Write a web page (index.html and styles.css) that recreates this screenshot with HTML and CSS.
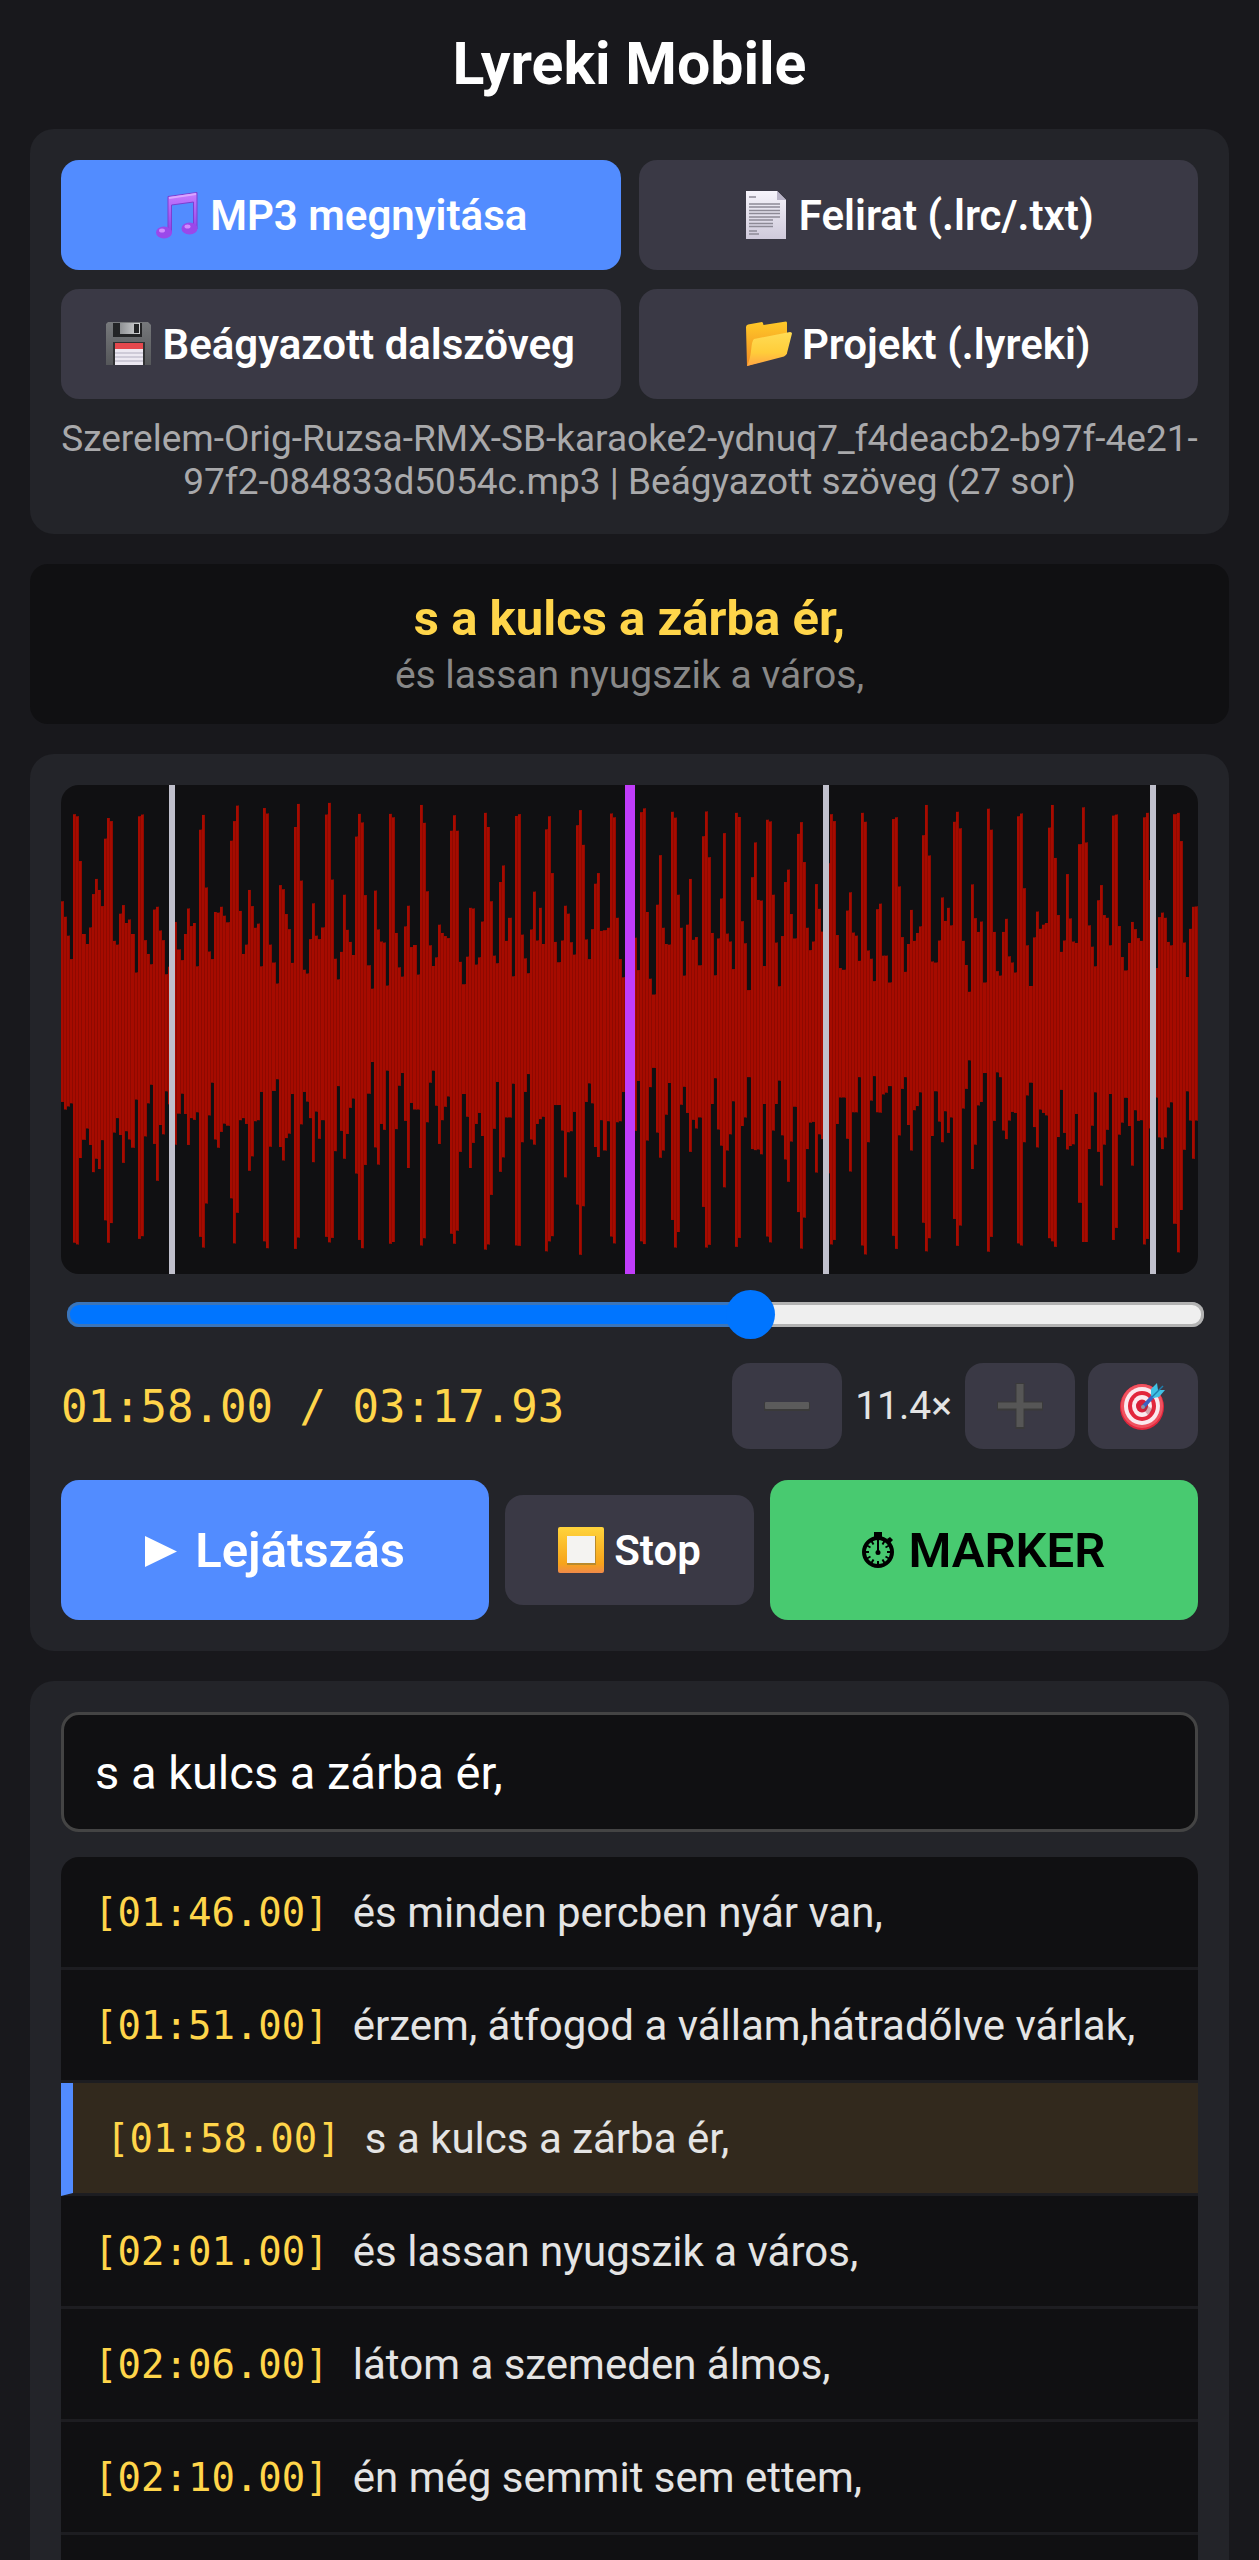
FILE: index.html
```html
<!DOCTYPE html>
<html lang="hu">
<head>
    <meta charset="UTF-8">
    <meta name="viewport" content="width=device-width, initial-scale=1.0">
    <title>Lyreki Mobile</title>
    <link rel="stylesheet" href="styles.css">
</head>
<body>

    <h1>Lyreki Mobile</h1>

    <!-- File buttons -->
    <section class="card">
        <div class="file-grid">
            <button type="button" class="btn primary">
                <svg class="icon" viewBox="0 0 46 48" aria-hidden="true">
                    <defs>
                        <linearGradient id="note" x1="0" y1="0" x2="0" y2="1">
                            <stop offset="0" stop-color="#c77dff"/>
                            <stop offset="1" stop-color="#8f3fe8"/>
                        </linearGradient>
                    </defs>
                    <path d="M14 5.500 43 1.500V38h-3.500V11L17.500 14V42H14Z" fill="url(#note)" stroke="#7c3fd0" stroke-width="1"/>
                    <path d="M15 7 42 3" stroke="#d9a6ff" stroke-width="2"/>
                    <ellipse cx="10" cy="41.500" rx="8" ry="6" fill="#9a48ea"/>
                    <ellipse cx="35.500" cy="37.500" rx="8" ry="6" fill="#9a48ea"/>
                    <ellipse cx="8" cy="39.500" rx="3" ry="2" fill="#d08cff"/>
                    <ellipse cx="33.500" cy="35.500" rx="3" ry="2" fill="#d08cff"/>
                </svg>
                <span>MP3 megnyitása</span>
            </button>
            <button type="button" class="btn">
                <svg class="icon" viewBox="0 0 46 48" aria-hidden="true">
                    <defs>
                        <linearGradient id="page" x1="0" y1="0" x2="0" y2="1">
                            <stop offset="0" stop-color="#f6f4fb"/>
                            <stop offset="1" stop-color="#cfcadb"/>
                        </linearGradient>
                    </defs>
                    <path d="M3 0H34L43 9V48H3Z" fill="url(#page)"/>
                    <path d="M34 0V9H43Z" fill="#b9b4c8"/>
                    <path d="M6 6h7M6 13h31M6 16h31M6 19.500h31M6 22.500h31M6 26h31M6 29h24M6 32.500h24M6 35.500h24M6 40h8M6 43h10" stroke="#8d8a96" stroke-width="1.300"/>
                </svg>
                <span>Felirat (.lrc/.txt)</span>
            </button>
            <button type="button" class="btn">
                <svg class="icon" viewBox="0 0 46 48" aria-hidden="true">
                    <defs>
                        <linearGradient id="disk" x1="0" y1="0" x2="0" y2="1">
                            <stop offset="0" stop-color="#77797c"/>
                            <stop offset="1" stop-color="#55575a"/>
                        </linearGradient>
                        <linearGradient id="shutter" x1="0" y1="0" x2="1" y2="0">
                            <stop offset="0" stop-color="#8f9194"/>
                            <stop offset="1" stop-color="#d4d5d7"/>
                        </linearGradient>
                    </defs>
                    <path d="M2 2H42L45 5V45H0V4Z" fill="url(#disk)"/>
                    <path d="M7 3H36V17H7Z" fill="#232426"/>
                    <path d="M14 3H34V14H14Z" fill="url(#shutter)"/>
                    <path d="M28 4h5v9h-5Z" fill="#232426"/>
                    <path d="M7 22H39V45H7Z" fill="#303133"/>
                    <path d="M9 23H37V45H9Z" fill="#ece9f2"/>
                    <path d="M9 23H37V29H9Z" fill="#e5484d"/>
                    <path d="M9 33h28M9 37h28M9 41h28" stroke="#c4c1cf" stroke-width="1.500"/>
                </svg>
                <span>Beágyazott dalszöveg</span>
            </button>
            <button type="button" class="btn">
                <svg class="icon" viewBox="0 0 46 48" aria-hidden="true">
                    <defs>
                        <linearGradient id="folder" x1="0" y1="0" x2="0" y2="1">
                            <stop offset="0" stop-color="#ffc928"/>
                            <stop offset="1" stop-color="#f08a24"/>
                        </linearGradient>
                        <linearGradient id="flap" x1="0" y1="0" x2="0" y2="1">
                            <stop offset="0" stop-color="#ffdc55"/>
                            <stop offset="0.600" stop-color="#ffcd3a"/>
                            <stop offset="1" stop-color="#ffa544"/>
                        </linearGradient>
                    </defs>
                    <path d="M0 7Q0 5 2 4.500L16 2Q17 2 17.500 5L40 1.500Q41 1.500 41 3V34L1 46Z" fill="url(#folder)"/>
                    <path d="M8 19 44 12Q46 12 46 13.500L41 33Q40 36 38 36.500L1 46Q4 40 5 31Q6 20 8 19Z" fill="url(#flap)"/>
                </svg>
                <span>Projekt (.lyreki)</span>
            </button>
        </div>
        <p class="file-info">Szerelem-Orig-Ruzsa-RMX-SB-karaoke2-ydnuq7_f4deacb2-b97f-4e21-97f2-084833d5054c.mp3 | Beágyazott szöveg (27 sor)</p>
    </section>

    <!-- Current and next lyric line -->
    <section class="display">
        <p class="current-line">s a kulcs a zárba ér,</p>
        <p class="next-line">és lassan nyugszik a város,</p>
    </section>

    <!-- Player -->
    <section class="card">
        <canvas id="waveform" class="waveform"></canvas>
        <input type="range" id="seek" class="seek" min="0" max="1000" value="606" aria-label="Pozíció">

        <div class="time-row">
            <span class="time">01:58.00 / 03:17.93</span>
            <div class="zoom">
                <button type="button" class="btn small" aria-label="Kicsinyítés">
                    <svg class="icon" viewBox="0 0 46 48" aria-hidden="true">
                        <rect x="0" y="20" width="46" height="9" rx="1" fill="#3a3a3a"/>
                        <rect x="1" y="20" width="44" height="7" rx="1" fill="#5b5b5b"/>
                    </svg>
                </button>
                <span class="zoom-value">11.4×</span>
                <button type="button" class="btn small" aria-label="Nagyítás">
                    <svg class="icon" viewBox="0 0 46 48" aria-hidden="true">
                        <path d="M18.500 1h9v18.500H46v9H27.500V47h-9V28.500H0v-9h18.500Z" fill="#3a3a3a"/>
                        <path d="M19.500 2h7v18.500H45v6H26.500V45h-7V26.500H1v-6h18.500Z" fill="#565656"/>
                    </svg>
                </button>
                <button type="button" class="btn small" aria-label="Ugrás a pozícióra">
                    <svg class="icon" viewBox="0 0 46 48" aria-hidden="true">
                        <ellipse cx="22" cy="25" rx="22" ry="23" fill="#e2263c"/>
                        <ellipse cx="22" cy="24" rx="21" ry="22" fill="#f0525f"/>
                        <ellipse cx="22" cy="24" rx="18" ry="19" fill="#fbe9ee"/>
                        <ellipse cx="22" cy="24" rx="14" ry="15" fill="#e2263c"/>
                        <ellipse cx="22" cy="24" rx="10" ry="11" fill="#fbe9ee"/>
                        <ellipse cx="22" cy="24" rx="6" ry="6.500" fill="#d81f38"/>
                        <path d="M22 26 28 33 33 28 26 22Z" fill="#8a2c38" opacity="0.350"/>
                        <path d="M23 25 36 11" stroke="#3a62c4" stroke-width="4"/>
                        <path d="M31 13V7L37 1L38 8L45 8L39 15L33 16Z" fill="#3fc1e4"/>
                        <path d="M32 15 43 4" stroke="#1f7fae" stroke-width="1.500"/>
                        <circle cx="23" cy="25" r="2" fill="#8b95a8"/>
                    </svg>
                </button>
            </div>
        </div>

        <div class="play-row">
            <button type="button" class="btn primary big play">
                <svg class="icon-small" viewBox="0 0 32 36" aria-hidden="true">
                    <path d="M0 4 32 19.500 0 35Z" fill="#fff"/>
                </svg>
                <span>Lejátszás</span>
            </button>
            <button type="button" class="btn">
                <svg class="icon" viewBox="0 0 46 48" aria-hidden="true">
                    <defs>
                        <linearGradient id="stop" x1="0" y1="0" x2="0" y2="1">
                            <stop offset="0" stop-color="#ffd43c"/>
                            <stop offset="0.800" stop-color="#f7a31a"/>
                            <stop offset="1" stop-color="#f08a4a"/>
                        </linearGradient>
                    </defs>
                    <rect x="0" y="1" width="46" height="46" rx="2" fill="url(#stop)"/>
                    <path d="M9 10h29v29H9Z" fill="#b98a2c"/>
                    <path d="M9 10h28v27H9Z" fill="#f4f3f1"/>
                </svg>
                <span>Stop</span>
            </button>
            <button type="button" class="btn marker big">
                <svg class="icon-small" viewBox="0 0 32 36" aria-hidden="true">
                    <path d="M12 0h8v5h-8Z" fill="#000"/>
                    <path d="m25 7 3-2 3 3-3 3Z" fill="#000"/>
                    <circle cx="16" cy="20" r="14" fill="none" stroke="#000" stroke-width="4"/>
                    <path d="M16 7v4M16 29v4M3 20h4M25 20h4M9.500 9l2 3.500M22.500 9l-2 3.500M9.500 31l2-3.500M22.500 31l-2-3.500M5 13.500l3.500 2M27 13.500l-3.500 2M5 26.500l3.500-2M27 26.500l-3.500-2" stroke="#000" stroke-width="2"/>
                    <path d="M16 9v12" stroke="#000" stroke-width="2"/>
                    <circle cx="16" cy="20.500" r="2.500" fill="#000"/>
                </svg>
                <span>MARKER</span>
            </button>
        </div>
    </section>

    <!-- Lyrics editor -->
    <section class="card">
        <input type="text" class="line-input" value="s a kulcs a zárba ér," aria-label="Sor szövege">
        <ul class="lyrics">
            <li><time>[01:46.00]</time><span>és minden percben nyár van,</span></li>
            <li><time>[01:51.00]</time><span>érzem, átfogod a vállam,hátradőlve várlak,</span></li>
            <li class="active"><time>[01:58.00]</time><span>s a kulcs a zárba ér,</span></li>
            <li><time>[02:01.00]</time><span>és lassan nyugszik a város,</span></li>
            <li><time>[02:06.00]</time><span>látom a szemeden álmos,</span></li>
            <li><time>[02:10.00]</time><span>én még semmit sem ettem,</span></li>
            <li></li>
        </ul>
    </section>

    <script>
        // Upper and lower edge of every bar, measured from 72 to 1493
        const waveTop = 72;
        const waveHeight = 1421;
        const tops = [
            410,455,510,578,157,163,293,505,534,486,389,345,377,424,228,168,177,525,536,446,
            421,473,463,505,617,163,158,523,563,593,434,426,495,523,622,600,560,470,550,581,
            505,431,482,473,599,202,159,370,556,578,441,443,426,452,471,234,177,132,438,563,
            536,377,424,487,475,599,139,155,536,588,649,363,375,447,491,589,194,127,350,609,
            620,520,416,510,520,486,158,124,347,577,637,557,391,493,528,566,222,156,181,392,
            596,664,379,492,527,530,655,156,166,502,602,629,483,423,543,537,623,130,182,381,
            538,598,573,478,502,511,517,205,160,205,586,651,571,429,431,594,573,469,153,194,
            410,568,590,354,306,525,458,628,162,157,507,576,619,492,382,524,429,534,201,163,
            328,528,587,524,423,446,529,565,189,145,246,521,578,491,359,328,496,494,487,155,
            166,458,578,631,560,520,540,516,610,151,140,441,635,681,420,276,487,534,536,150,
            167,391,487,626,478,345,522,514,596,221,149,282,502,625,518,402,212,504,527,607,
            153,165,468,532,668,340,239,406,408,598,173,178,391,530,657,511,354,318,447,518,
            214,180,296,487,552,527,360,432,498,520,300,157,177,508,604,609,437,384,501,510,
            583,153,179,553,577,642,433,417,568,568,646,171,166,367,514,615,534,435,525,502,
            483,218,130,277,585,588,524,399,467,429,480,179,150,198,525,595,673,361,459,499,
            469,646,141,202,499,613,626,499,461,570,588,617,163,155,372,538,656,515,440,490,
            478,473,196,130,284,450,557,524,331,460,527,531,244,137,239,480,542,599,407,363,
            450,458,538,161,158,482,572,611,531,470,491,517,525,166,153,348,560,604,456,443,
            458,528,538,157,153,235,530,630,490,426,425
        ];
        const bottoms = [
            993,1015,1006,997,1402,1407,1156,1103,1070,1118,1197,1158,1188,1104,1337,1402,1345,1082,1040,1089,
            1170,1078,1102,1126,986,1391,1383,1093,997,943,1115,1222,1060,1087,962,1000,1060,1117,1027,969,
            1028,1118,1040,1045,1023,1385,1416,1288,1032,937,1102,1126,1080,1056,1062,1273,1404,1315,1046,1040,
            1057,1193,1151,1049,1046,964,1398,1418,1123,961,927,1124,1163,1098,1085,970,1420,1387,1058,964,
            992,1040,1168,1021,1100,1046,1385,1401,1388,1136,947,1077,1158,1086,1010,983,1201,1394,1418,1176,
            969,877,1125,1175,1057,1074,902,1405,1400,1072,946,909,1048,1185,996,1015,1015,1410,1389,1052,
            937,902,1004,1115,1046,1007,977,1376,1405,1367,1138,970,1036,1185,1112,1057,1025,1092,1422,1407,
            1263,1071,935,1196,1154,1038,1038,940,1410,1411,1110,964,912,1102,1117,1057,1043,1036,1427,1398,
            1383,1002,1002,1076,1212,1081,1078,1022,1291,1437,1296,993,939,997,1124,1153,1046,1134,1049,1384,
            1404,1052,1049,964,1050,1070,1060,1077,932,1398,1406,1105,950,894,1082,1155,1134,1030,938,1336,
            1416,1371,1001,949,1025,1138,1045,1070,1038,1298,1416,1408,999,924,1073,1120,1241,1134,1087,991,
            1414,1388,1063,1038,921,1130,1133,1131,1145,999,1384,1401,1076,999,931,1090,1160,1225,1108,1007,
            1313,1419,1329,1130,1053,1051,1198,1087,1101,1060,1200,1407,1394,1057,980,980,1100,1195,1023,1023,
            921,1410,1436,1110,989,918,1023,1024,971,966,947,1382,1420,1090,955,921,1060,1134,1017,1005,
            965,1344,1427,1389,1092,962,1050,1110,1020,1083,1038,1333,1411,1352,1012,955,872,1188,1117,1003,
            993,909,1428,1385,1048,907,921,1076,1101,1047,1022,1025,1404,1410,1110,974,937,1066,1125,1015,
            1025,1032,1389,1398,1414,1095,958,1083,1131,1121,1116,1028,1286,1400,1400,1130,1062,965,1138,1236,
            1117,1074,970,1394,1359,1088,1053,981,1063,1178,1017,1048,1046,1407,1391,1070,1000,980,1096,1130,
            1096,1009,994,1347,1430,1307,1132,962,1047,1158,1047
        ];
        // Marker positions as a share of the visible width
        const markers = [0.0972, 0.6725, 0.9604];

        function drawWaveform() {
            const canvas = document.getElementById('waveform');
            const ctx = canvas.getContext('2d');
            const w = canvas.width = canvas.clientWidth;
            const h = canvas.height = canvas.clientHeight;
            const step = w / tops.length;

            tops.forEach((top, i) => {
                const x1 = Math.round(i * step);
                const x2 = Math.round((i + 1) * step);
                const y1 = (top - waveTop) / waveHeight * h;
                const y2 = (bottoms[i] - waveTop) / waveHeight * h;
                ctx.fillStyle = '#a60b00';
                ctx.fillRect(x1, y1, x2 - x1, y2 - y1);
                // thin seam between two bars
                ctx.fillStyle = '#8f0900';
                ctx.fillRect(x2 - 1, y1, 1, y2 - y1);
            });

            ctx.fillStyle = '#c0c0cc';
            markers.forEach(m => ctx.fillRect(Math.round(m * w) - 3, 0, 6, h));

            // Playhead
            ctx.fillStyle = '#c03cfa';
            ctx.fillRect(Math.round(w / 2) - 5, 0, 10, h);
        }

        function updateSeek() {
            const seek = document.getElementById('seek');
            seek.style.setProperty('--fill', (seek.value / seek.max * 100) + '%');
        }

        document.getElementById('seek').addEventListener('input', updateSeek);
        window.addEventListener('resize', drawWaveform);
        drawWaveform();
        updateSeek();
    </script>

</body>
</html>
```
FILE: styles.css
```css
* {
    margin: 0;
    padding: 0;
    box-sizing: border-box;
}

body {
    height: 100vh;
    overflow: hidden;
    padding: 30px;
    background-color: #18181c;
    color: #e4e4e4;
    font-family: Roboto, sans-serif;
    font-size: 42px;
}

h1 {
    margin-bottom: 31px;
    color: #fff;
    font-size: 59px;
    line-height: 68px;
    font-weight: 700;
    text-align: center;
}

.card {
    margin-bottom: 30px;
    padding: 31px;
    background-color: #232429;
    border-radius: 24px;
}

/* Buttons */
.btn {
    display: flex;
    align-items: center;
    justify-content: center;
    gap: 10px;
    min-height: 110px;
    padding: 0 30px;
    border: none;
    border-radius: 18px;
    background-color: #3a3945;
    color: #fff;
    font-family: inherit;
    font-size: 42px;
    font-weight: 600;
    white-space: nowrap;
    cursor: pointer;
}

.btn.primary {
    background-color: #528cff;
}

.btn.marker {
    background-color: #48ca70;
    color: #000;
}

.btn.big {
    flex: 1;
    gap: 14px;
    min-height: 140px;
    font-size: 49px;
}

.btn.play {
    gap: 18px;
}

.btn.small {
    width: 110px;
    min-height: 86px;
    padding: 0;
}

.icon {
    width: 46px;
    height: 48px;
}

.icon-small {
    width: 32px;
    height: 36px;
}

.file-grid {
    display: grid;
    grid-template-columns: 1fr 1fr;
    gap: 19px 18px;
}

.file-info {
    margin-top: 18px;
    color: #a9a9ab;
    font-size: 37px;
    line-height: 43px;
    text-align: center;
}

/* Current and next line */
.display {
    margin-bottom: 30px;
    padding: 26px 31px 21px;
    background-color: #101012;
    border-radius: 18px;
    text-align: center;
}

.current-line {
    color: #ffd54a;
    font-size: 49px;
    line-height: 58px;
    font-weight: 700;
}

.next-line {
    color: #888;
    font-size: 39px;
    line-height: 55px;
}

/* Waveform and slider */
.waveform {
    display: block;
    width: 100%;
    height: 489px;
    background-color: #101012;
    border-radius: 18px;
}

.seek {
    display: block;
    position: relative;
    left: 6px;
    width: 100%;
    height: 49px;
    margin: 16px 0 24px;
    background: none;
    appearance: none;
    -webkit-appearance: none;
}

.seek::-webkit-slider-runnable-track {
    height: 25px;
    border-radius: 12px;
    background: linear-gradient(to right, #0075ff var(--fill), #efefef var(--fill));
    box-shadow: inset 0 0 0 3px rgba(118, 118, 118, 0.5);
}

.seek::-webkit-slider-thumb {
    -webkit-appearance: none;
    width: 49px;
    height: 49px;
    margin-top: -12px;
    border-radius: 50%;
    background-color: #0075ff;
}

.time-row {
    display: flex;
    align-items: center;
    justify-content: space-between;
    margin-bottom: 31px;
}

.time,
.lyrics time {
    color: #ffd54a;
    font-family: "Droid Sans Mono", "DejaVu Sans Mono", monospace;
}

.time {
    font-size: 44px;
}

.zoom {
    display: flex;
    align-items: center;
    gap: 13px;
}

.zoom-value {
    font-size: 39px;
}

.play-row {
    display: flex;
    align-items: center;
    gap: 16px;
}

.play-row .btn {
    padding: 0 53px;
}

/* Lyrics list */
.line-input {
    display: block;
    width: 100%;
    height: 120px;
    padding: 0 31px;
    border: 3px solid #444;
    border-radius: 18px;
    background-color: #101012;
    color: #fff;
    font-family: inherit;
    font-size: 47px;
}

.lyrics {
    margin-top: 25px;
    background-color: #101012;
    border-radius: 18px;
    overflow: hidden;
    list-style: none;
}

.lyrics li {
    display: flex;
    align-items: center;
    gap: 24px;
    height: 113px;
    padding: 0 33px;
    border-bottom: 3px solid #1d1d21;
}

.lyrics li.active {
    border-left: 12px solid #528cff;
    background-color: #32291d;
}

.lyrics time {
    font-size: 39px;
}
```
